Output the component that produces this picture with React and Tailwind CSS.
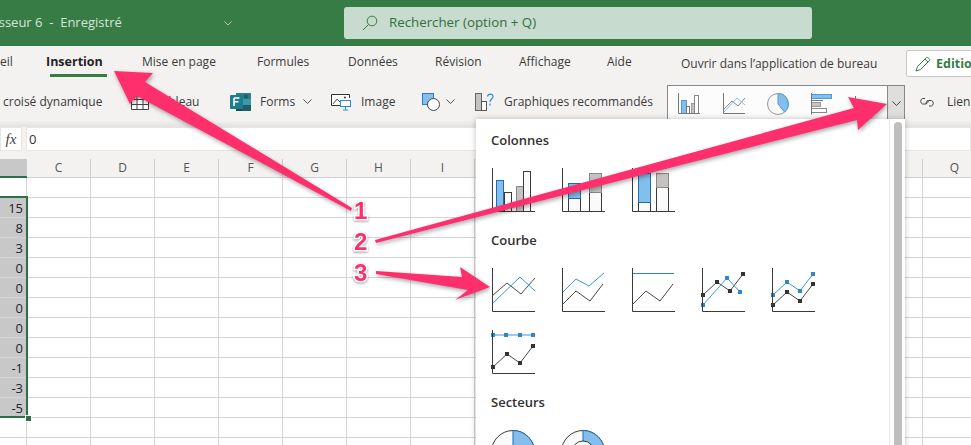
import React from "react";

const FONT = "font-['Open_Sans','Noto_Sans',sans-serif]";

function Poly({ pts, c, w = 1 }) {
  return <polyline points={pts} fill="none" stroke={c} strokeWidth={w} />;
}
function Markers({ pts, c }) {
  return pts.map(([x, y], i) => <rect key={i} x={x - 2} y={y - 2} width="4" height="4" fill={c} />);
}
const toStr = (p) => p.map((q) => q.join(",")).join(" ");
const BLUE = "#3A96DD";
const MARK = "#2E86CB";
const DARK = "#4A4948";

function Axes() {
  return <path d="M1.5 0V43.5H44" fill="none" stroke="#3B3A39" strokeWidth="1" />;
}
function ChartIcon({ children }) {
  return (
    <svg width="44" height="44" viewBox="0 0 44 44" className="shrink-0 block">
      {children}
      <Axes />
    </svg>
  );
}
function R({ x, y, w, h, f, s }) {
  return <rect x={x + 0.5} y={y + 0.5} width={w} height={h} fill={f} stroke={s} strokeWidth="1" />;
}
const colIcons = [
  <>
    <R x={5} y={12} w={7} h={31} f="#83BEEC" s="#1F6CB5" />
    <R x={13} y={24} w={7} h={19} f="#FAFAFA" s="#3B3A39" />
    <R x={25} y={18} w={7} h={25} f="#C4C3C1" s="#8A8886" />
    <R x={32} y={3} w={7} h={40} f="#FAFAFA" s="#3B3A39" />
  </>,
  <>
    <R x={7} y={30} w={12} h={13} f="#FAFAFA" s="#3B3A39" />
    <R x={7} y={15} w={12} h={15} f="#83BEEC" s="#1F6CB5" />
    <R x={28} y={24} w={12} h={19} f="#FAFAFA" s="#3B3A39" />
    <R x={28} y={5} w={12} h={19} f="#C4C3C1" s="#8A8886" />
  </>,
  <>
    <R x={7} y={34} w={12} h={9} f="#FAFAFA" s="#3B3A39" />
    <R x={7} y={5} w={12} h={29} f="#83BEEC" s="#1F6CB5" />
    <R x={25} y={19} w={12} h={24} f="#FAFAFA" s="#3B3A39" />
    <R x={25} y={5} w={12} h={14} f="#C4C3C1" s="#8A8886" />
  </>,
];
const B1 = [[2, 37], [16, 24], [29, 33], [42, 16]];
const B2 = [[2, 27], [16, 14], [29, 23], [42, 6]];
const lineIcons = [
  <>
    <Poly pts="1,28 16,15 30,26 44,10" c={DARK} />
    <Poly pts="1,36 29,9 44,23" c={BLUE} />
  </>,
  <>
    <Poly pts="1,37 15,23 29,33 42,16" c={DARK} />
    <Poly pts="1,25 15,11 28,18 43,5" c={BLUE} />
  </>,
  <>
    <Poly pts="1,37 15,23 29,33 42,16" c={DARK} />
    <Poly pts="1,5.5 43,5.5" c="#2E86CB" />
  </>,
  <>
    <Poly pts={toStr(B2)} c={DARK} />
    <Markers pts={B2} c="#333" />
    <Poly pts="2,37 26,10 39,24" c={BLUE} />
    <Markers pts={[[2, 37], [26, 10], [39, 24]]} c={MARK} />
  </>,
  <>
    <Poly pts={toStr(B1)} c={DARK} />
    <Markers pts={B1} c="#333" />
    <Poly pts={toStr(B2)} c={BLUE} />
    <Markers pts={B2} c={MARK} />
  </>,
  <>
    <Poly pts={toStr(B1)} c={DARK} />
    <Markers pts={B1} c="#333" />
    <Poly pts="2,5 42,5" c={BLUE} />
    <Markers pts={[[2, 5], [15, 5], [29, 5], [42, 5]]} c={MARK} />
  </>,
];

function Section({ title, className = "", children }) {
  return (
    <div className={className}>
      <div className="text-[13px] leading-[20px] font-semibold text-[#323130]">{title}</div>
      {children}
    </div>
  );
}

function Chevron({ className = "", size = 10, color = "#444" }) {
  return (
    <svg width={size} height={size * 0.6} viewBox="0 0 10 6" className={className}>
      <path d="M0.5 0.5L5 5L9.5 0.5" fill="none" stroke={color} strokeWidth="1" />
    </svg>
  );
}

function TableIcon() {
  return (
    <svg width="18" height="15" viewBox="0 0 18 15" className="shrink-0">
      <path d="M.5 4.5H17.5V14.5H.5ZM.5 9.5H17.5M6 .5V14.5M12 .5V14.5M6 .5H12" fill="#fff" stroke="#444" strokeWidth="1" />
    </svg>
  );
}
function FormsIcon() {
  return (
    <svg width="21" height="18" viewBox="0 0 21 18" className="shrink-0">
      <rect x="6" y="0" width="15" height="6" fill="#2F7F8A" />
      <circle cx="16" cy="3.5" r="2.2" fill="#1F5F68" />
      <rect x="12" y="6" width="9" height="6" fill="#3A9AA5" />
      <rect x="12" y="12" width="9" height="6" fill="#1E5F68" />
      <rect x="6" y="12" width="6" height="6" fill="#174E56" />
      <rect x="0" y="2" width="13" height="14" rx="1" fill="#1F7E8C" />
      <path d="M4 5H9.5M4 5V13M4 8.8H8.5" stroke="#fff" strokeWidth="1.6" fill="none" />
    </svg>
  );
}
function ImageIcon() {
  return (
    <svg width="20" height="18" viewBox="0 0 20 18" className="shrink-0">
      <path d="M11 12.5H.5V1.5H18.5V5" fill="#fff" stroke="#333" />
      <path d="M2 11L6 6L9 9L11 7" fill="none" stroke="#555" />
      <circle cx="14" cy="4.5" r="1" fill="#333" />
      <rect x="9.5" y="7.5" width="10" height="6" fill="#fff" stroke="#2B8AD0" />
      <path d="M14.5 13.5V16.5M12 17H17" stroke="#2B8AD0" fill="none" />
    </svg>
  );
}
function ShapesIcon() {
  return (
    <svg width="19" height="18" viewBox="0 0 19 18" className="shrink-0">
      <rect x="0.5" y="0.5" width="11" height="11" fill="#83BEEC" stroke="#2B7CD3" />
      <circle cx="11.5" cy="11.5" r="6" fill="#fff" stroke="#444" />
    </svg>
  );
}
function RecommendIcon() {
  return (
    <svg width="20" height="18" viewBox="0 0 20 18" className="shrink-0">
      <rect x="0.5" y="0.5" width="6" height="17" fill="#C4C3C1" stroke="#666" />
      <rect x="6.5" y="8.5" width="5" height="9" fill="#fff" stroke="#555" />
      <path d="M12.5 3.5C13 0.5 18 0.3 18 3.5C18 6 15 6 15 9M15 10.5V12.5" fill="none" stroke="#2B8AD0" strokeWidth="1.2" />
    </svg>
  );
}
function LinkIcon() {
  return (
    <svg width="18" height="10" viewBox="0 0 18 10" className="shrink-0">
      <path d="M7 1.5H4.5A3 3 0 0 0 4.5 7H7.5A3 3 0 0 0 10 3M11 9H13.5A3 3 0 0 0 13.5 3.5H10.5A3 3 0 0 0 8 7" fill="none" stroke="#444" />
    </svg>
  );
}
function PencilIcon() {
  return (
    <svg width="16" height="16" viewBox="0 0 16 16" className="shrink-0">
      <path d="M1 15L2.5 10.5L11.5 1.5C12.5 .5 15.5 3.5 14.5 4.5L5.5 13.5Z M10 3L13 6" fill="none" stroke="#377C44" strokeWidth="1" />
    </svg>
  );
}

function Gallery() {
  return (
    <div className="w-[238px] h-[36px] shrink-0 flex border border-[#8A8886] border-b-0 bg-[#FCFCFC] self-end -mb-px">
      <div className="flex-1 flex items-start pt-[7px] pl-[10px] gap-[22px]">
        <svg width="23" height="22" viewBox="0 0 23 22" className="shrink-0">
          <rect x="3.5" y="7.5" width="5" height="13" fill="#83BEEC" stroke="#4C9BD8" />
          <rect x="8.5" y="13.5" width="3" height="7" fill="#fff" stroke="#777" />
          <rect x="13.5" y="10.5" width="3" height="10" fill="#C4C3C1" stroke="#999" />
          <rect x="16.5" y="2.5" width="4" height="18" fill="#fff" stroke="#888" />
          <path d="M.5 0V20.5H22" fill="none" stroke="#777" />
        </svg>
        <svg width="22" height="22" viewBox="0 0 22 22" className="shrink-0">
          <path d="M.5 0V20.5H22" fill="none" stroke="#777" />
          <path d="M1 16L9 8L15 13L22 5" fill="none" stroke="#8A8886" />
          <path d="M1 19L14 5L22 12" fill="none" stroke="#83BEEC" />
        </svg>
        <svg width="22" height="22" viewBox="0 0 22 22" className="shrink-0">
          <circle cx="11" cy="11" r="10.5" fill="#FAFAFA" stroke="#999" />
          <path d="M11 .5A10.5 10.5 0 0 1 17.5 19L11 11Z" fill="#83BEEC" stroke="#4C9BD8" />
        </svg>
        <svg width="22" height="22" viewBox="0 0 22 22" className="shrink-0">
          <rect x="0.5" y="1.5" width="20" height="4" fill="#83BEEC" stroke="#4C9BD8" />
          <rect x="0.5" y="9.5" width="9" height="4" fill="#C4C3C1" stroke="#999" />
          <rect x="0.5" y="15.5" width="15" height="4" fill="#fff" stroke="#888" />
          <path d="M.5 0V21.5M.5 7.5H12" fill="none" stroke="#777" />
        </svg>
        <svg width="22" height="22" viewBox="0 0 22 22" className="shrink-0">
          <path d="M.5 3V21" fill="none" stroke="#777" />
          <rect x="20" y="15" width="2" height="4" fill="#444" />
        </svg>
      </div>
      <div className="w-[17px] bg-[#DEDEDC] border-l border-[#8A8886] flex items-center justify-center">
        <Chevron size={9} color="#333" />
      </div>
    </div>
  );
}

const cols = ["C", "D", "E", "F", "G", "H", "I", "J", "K", "L", "M", "N", "O", "P", "Q"];
const values = ["15", "8", "3", "0", "0", "0", "0", "0", "-1", "-3", "-5", "", "", ""];

function GridRow({ value }) {
  return (
    <div className="flex h-[20px] shrink-0">
      <div
        className={`w-[27px] shrink-0 border-b border-r border-[#D4D4D4] text-right pr-[3px] text-[13px] leading-[21px] text-[#252423] ${
          value ? "bg-[#C8C8C8]" : "bg-white"
        }`}
      >
        {value}
      </div>
      {cols.map((c) => (
        <div key={c} className="w-[64px] shrink-0 border-b border-r border-[#D4D4D4]" />
      ))}
    </div>
  );
}

function Arrows() {
  return (
    <svg width="971" height="445" viewBox="0 0 971 445" className="absolute left-0 top-0 pointer-events-none drop-shadow-[1px_2px_2px_rgba(0,0,0,0.35)]">
      <polygon fill="#FF2E6C" points="114,71 153,73 145,82 352,208 351,211 137,96 130,104" />
      <polygon fill="#FF2E6C" points="887,104 848,97 854,108 375,240 376,243 857,120 858,130" />
      <polygon fill="#FF2E6C" points="490,287 460,267 462,277 376,271 376,274 468,290 455,300" />
    </svg>
  );
}

function Digit({ className, children }) {
  return (
    <div
      className={`absolute font-['Liberation_Sans',sans-serif] font-bold text-[24px] leading-[24px] text-[#FF2E6C] [-webkit-text-stroke:3px_white] [paint-order:stroke_fill] drop-shadow-[0px_1px_1px_rgba(0,0,0,0.4)] ${className}`}
    >
      {children}
    </div>
  );
}

export default function App() {
  return (
    <div className={`relative w-[971px] h-[445px] overflow-hidden bg-[#F3F2F1] ${FONT}`}>
      {/* title bar */}
      <div className="h-[46px] bg-[#377C44] flex items-center overflow-hidden">
        <div className="w-[344px] shrink-0 flex items-center">
          <span className="text-[13px] whitespace-nowrap text-[#D5E5D9] -ml-[20px] w-[244px]">Classeur 6&nbsp; -&nbsp; Enregistré</span>
          <Chevron size={8} color="#D5E5D9" />
        </div>
        <div className="w-[468px] h-[32px] shrink-0 rounded-[3px] bg-[#C8DBCF] flex items-center pl-[18px] gap-[11px] text-[13.3px] text-[#2F6F3E]">
          <svg width="16" height="16" viewBox="0 0 16 16" className="shrink-0">
            <circle cx="10" cy="6" r="4.8" fill="none" stroke="#377C44" />
            <path d="M6.5 9.5L1 15" stroke="#377C44" fill="none" />
          </svg>
          <span>Rechercher (option + Q)</span>
        </div>
      </div>

      {/* tabs */}
      <div className="h-[38px] flex items-start pt-[6px] text-[12px] leading-[20px] text-[#3B3A39] whitespace-nowrap">
        <span className="w-[46px] shrink-0 text-right pr-[36px]">eil</span>
        <div className="w-[96px] shrink-0 flex flex-col text-[12.5px]">
          <span className="font-bold text-[#252423]">Insertion</span>
          <div className="w-[57px] h-[3px] ml-[4px] mt-[2px] bg-[#377C44]" />
        </div>
        <span className="w-[115px] shrink-0">Mise en page</span>
        <span className="w-[91px] shrink-0">Formules</span>
        <span className="w-[87px] shrink-0">Données</span>
        <span className="w-[84px] shrink-0">Révision</span>
        <span className="w-[88px] shrink-0">Affichage</span>
        <span className="w-[74px] shrink-0">Aide</span>
        <span className="w-[225px] shrink-0 pt-[2px]">Ouvrir dans l’application de bureau</span>
        <div className="h-[27px] w-[80px] shrink-0 -mt-[2px] bg-white border border-[#C8C6C4] rounded-[2px] flex items-center pl-[8px] gap-[5px] font-bold text-[12.5px] text-[#377C44]">
          <PencilIcon />
          <span>Edition</span>
        </div>
      </div>

      {/* toolbar */}
      <div className="h-[36px] flex items-center text-[12px] text-[#3B3A39] whitespace-nowrap">
        <span className="w-[131px] shrink-0 pl-[3px]">croisé dynamique</span>
        <div className="w-[99px] shrink-0 flex items-center gap-[6px]">
          <TableIcon />
          <span>Tableau</span>
        </div>
        <div className="w-[101px] shrink-0 flex items-center">
          <FormsIcon />
          <span className="ml-[9px] mr-[8px]">Forms</span>
          <Chevron size={9} />
        </div>
        <div className="w-[91px] shrink-0 flex items-center gap-[10px]">
          <ImageIcon />
          <span>Image</span>
        </div>
        <div className="w-[53px] shrink-0 flex items-center gap-[5px]">
          <ShapesIcon />
          <Chevron size={9} />
        </div>
        <div className="w-[192px] shrink-0 flex items-center gap-[9px]">
          <RecommendIcon />
          <span>Graphiques recommandés</span>
        </div>
        <Gallery />
        <div className="flex items-center ml-[13px] gap-[11px]">
          <LinkIcon />
          <span>Lien</span>
        </div>
      </div>

      {/* shadow band */}
      <div className="h-[7px] bg-gradient-to-b from-[#F3F2F1] to-[#E3E2E1]" />

      {/* formula bar */}
      <div className="h-[24px] flex gap-[4px] bg-[#F3F2F1]">
        <div className="w-[22px] bg-white border border-[#E6E5E4] flex items-center justify-center font-['Liberation_Serif',serif] italic text-[15px] text-[#444]">
          fx
        </div>
        <div className="flex-1 bg-white border border-[#E6E5E4] pl-[2px] text-[13px] leading-[22px] text-[#333]">0</div>
      </div>
      <div className="h-[8px]" />

      {/* grid */}
      <div className="relative">
        <div className="flex h-[19px]">
          <div className="w-[27px] shrink-0 bg-[#C8C8C8] border-b-2 border-[#2F6F45]" />
          {cols.map((c) => (
            <div
              key={c}
              className="w-[64px] shrink-0 border-b border-r border-[#CFCFCF] text-center text-[12px] leading-[18px] text-[#555] bg-[#F3F2F1]"
            >
              {c}
            </div>
          ))}
        </div>
        <div className="bg-white h-[267px] overflow-hidden">
          <GridRow value="" />
          {values.map((v, i) => (
            <GridRow key={i} value={v} />
          ))}
        </div>
        {/* selection */}
        <div className="absolute left-[-2px] top-[37px] w-[30px] h-[222px] border-2 border-[#2F6F45]" />
        <div className="absolute left-[25px] top-[256px] w-[5px] h-[5px] bg-[#2F6F45] border border-white box-content" />
      </div>

      {/* chart menu */}
      <div className="absolute left-[476px] top-[119px] w-[429px] h-[340px] bg-white shadow-[0_0_6px_rgba(0,0,0,0.25)] flex">
        <div className="w-[413px] pl-[15px] pt-[11px]">
          <Section title="Colonnes" className="h-[100px]">
            <div className="flex gap-[26px] mt-[18px]">
              {colIcons.map((c, i) => (
                <ChartIcon key={i}>{c}</ChartIcon>
              ))}
            </div>
          </Section>
          <Section title="Courbe" className="h-[162px]">
            <div className="flex flex-wrap w-[350px] gap-x-[26px] gap-y-[18px] mt-[18px]">
              {lineIcons.map((c, i) => (
                <ChartIcon key={i}>{c}</ChartIcon>
              ))}
            </div>
          </Section>
          <Section title="Secteurs">
            <div className="flex gap-[26px] mt-[18px]">
              <svg width="44" height="44" viewBox="0 0 44 44" className="shrink-0">
                <circle cx="22" cy="22" r="21.5" fill="#FAFAFA" stroke="#3B3A39" />
                <path d="M22 .5A21.5 21.5 0 0 1 43.5 22L22 22Z" fill="#83BEEC" stroke="#1F6CB5" />
              </svg>
              <svg width="44" height="44" viewBox="0 0 44 44" className="shrink-0">
                <circle cx="22" cy="22" r="21.5" fill="#FAFAFA" stroke="#3B3A39" />
                <path d="M22 .5A21.5 21.5 0 0 1 43.5 22H33A11 11 0 0 0 22 11Z" fill="#83BEEC" stroke="#1F6CB5" />
                <circle cx="22" cy="22" r="11" fill="#fff" stroke="#3B3A39" />
              </svg>
            </div>
          </Section>
        </div>
        <div className="w-[16px] border-l border-[#E8E8E8] flex justify-center pt-[3px]">
          <div className="w-[8px] h-[340px] rounded-[4px] bg-[#BFBFBF]" />
        </div>
      </div>

      <Arrows />
      <Digit className="left-[354px] top-[199px]">1</Digit>
      <Digit className="left-[354px] top-[230px]">2</Digit>
      <Digit className="left-[354px] top-[261px]">3</Digit>
    </div>
  );
}
